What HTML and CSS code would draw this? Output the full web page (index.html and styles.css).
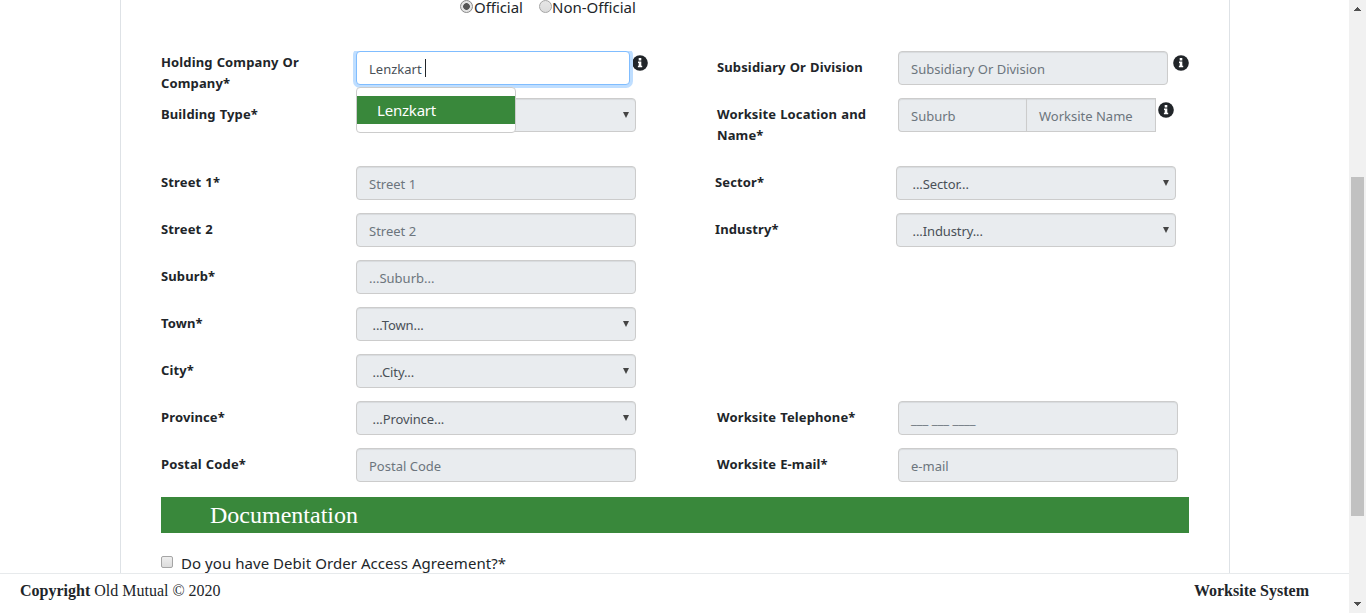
FILE: index.html
```html
<!DOCTYPE html>
<html lang="en">
<head>
<meta charset="utf-8">
<title>Worksite System</title>
<link rel="stylesheet" href="styles.css">
</head>
<body>
<svg width="0" height="0" class="defs"><symbol id="info" viewBox="0 0 16 16"><circle cx="8" cy="8" r="7.8" fill="#212529"/><path fill="#fff" d="M6.7 3h2.6v2.5H6.7zM6 6.5h3.3v4.3h.9v1.5H5.9v-1.5h.8V8H6z"/></symbol></svg>
<div class="window">
  <div class="page">
    <main class="panel">
      <div class="radios"><span class="radio checked"></span><span class="official">Official</span><span class="radio second"></span><span>Non-Official</span></div>
      <div class="form">
        <div class="col left">
          <div class="row"><label class="label raised">Holding Company Or Company*</label>
            <div class="holder"><div class="field short focus">Lenzkart<i class="caret"></i></div>
              <div class="menu"><div class="option">Lenzkart</div></div></div>
            <svg class="info"><use href="#info"/></svg></div>
          <div class="row tall"><label class="label">Building Type*</label><div class="field select lower"></div></div>
          <div class="row"><label class="label">Street 1*</label><div class="field">Street 1</div></div>
          <div class="row"><label class="label">Street 2</label><div class="field">Street 2</div></div>
          <div class="row"><label class="label">Suburb*</label><div class="field">...Suburb...</div></div>
          <div class="row"><label class="label">Town*</label><div class="field select">...Town...</div></div>
          <div class="row"><label class="label">City*</label><div class="field select">...City...</div></div>
          <div class="row"><label class="label">Province*</label><div class="field select">...Province...</div></div>
          <div class="row"><label class="label">Postal Code*</label><div class="field">Postal Code</div></div>
        </div>
        <div class="col right">
          <div class="row"><label class="label">Subsidiary Or Division</label><div class="field medium">Subsidiary Or Division</div><svg class="info gap"><use href="#info"/></svg></div>
          <div class="row tall"><label class="label">Worksite Location and Name*</label><div class="field part">Suburb</div><div class="field part last">Worksite Name</div><svg class="info near"><use href="#info"/></svg></div>
          <div class="row shifted"><label class="label">Sector*</label><div class="field select">...Sector...</div></div>
          <div class="row shifted spaced"><label class="label">Industry*</label><div class="field select">...Industry...</div></div>
          <div class="row"><label class="label">Worksite Telephone*</label><div class="field phone">___ ___ ____</div></div>
          <div class="row"><label class="label">Worksite E-mail*</label><div class="field">e-mail</div></div>
        </div>
      </div>
      <h2 class="heading">Documentation</h2>
      <div class="agree"><span class="check"></span><span class="question">Do you have Debit Order Access Agreement?*</span></div>
    </main>
    <footer class="footer"><span><b>Copyright</b> Old Mutual © 2020</span><b class="system">Worksite System</b></footer>
  </div>
  <div class="scrollbar">
    <svg class="arrow" viewBox="0 0 17 17"><path d="M5 11h7v-1h-1V9h-1V8H9V7H8v1H7v1H6v1H5z" fill="#505050"/></svg>
    <div class="thumb"></div>
    <svg class="arrow end" viewBox="0 0 17 17"><path d="M5 6h7v1h-1v1h-1v1H9v1H8V9H7V8H6V7H5z" fill="#505050"/></svg>
  </div>
</div>
</body>
</html>
```
FILE: styles.css
```css
* { box-sizing: border-box; }
body { margin: 0; background: #fff; color: #212529; font-family: "Noto Sans", "Open Sans", sans-serif; overflow: hidden; }
.defs { display: block; }
.window { display: flex; height: 613px; }
.page { width: 1349px; display: flex; flex-direction: column; }
.panel { height: 573px; width: 1110px; margin-left: 120px; padding: 0 40px; border: solid #dee2e6; border-width: 0 1px; overflow: hidden; }
.radios { display: flex; height: 51px; padding-left: 299px; font-size: 15px; line-height: 14px; }
.official { width: 65px; letter-spacing: -.05px; }
.radio { width: 13px; height: 13px; border: 1px solid #a5a5a5; border-radius: 50%; background: linear-gradient(#e6e6e6, #dcdcdc); margin-right: 1px; flex: none; }
.radio.second { margin-right: 0; }
.radio.checked { background: radial-gradient(circle, #555 0 3px, #e4e4e4 3.7px); border-color: #888; }
.form { display: flex; height: 446px; }
.col { width: 556px; flex: none; }
.row { display: flex; height: 47px; }
.row.tall { height: 68px; }
.label { font-weight: 700; font-size: 13px; letter-spacing: .13px; word-spacing: .5px; line-height: 21px; padding-top: 6px; width: 195px; padding-right: 45px; flex: none; }
.label.raised { padding-top: 1px; }
.right .label { width: 181px; padding-right: 20px; }
.field { width: 280px; height: 34px; border: 1px solid #ccc; border-radius: 4px; background: #e9ecef; color: #6c757d; font-size: 13px; line-height: 20px; padding: 7px 12px; box-shadow: inset 0 1px 1px rgba(0,0,0,.075); position: relative; white-space: nowrap; flex: none; }
.field.short { width: 274px; }
.field.medium { width: 270px; }
.field.focus { margin-right: 1px; background: #fff; border-color: #80bdff; color: #495057; box-shadow: 0 0 0 3px #bfdeff; clip-path: inset(0 -4px -4px -4px); display: flex; }
.caret { width: 1px; height: 18px; margin: 0 0 0 3px; background: #212529; }
.select { padding-left: 15.5px; color: #495057; letter-spacing: -.1px; }
.select::after { content: ""; position: absolute; right: 6px; top: 13px; border: solid transparent; border-width: 6px 3px 0; border-top-color: #444; }
.holder { position: relative; }
.menu { position: absolute; z-index: 2; left: 0; top: 36px; width: 160px; height: 46px; background: #fff; border: 1px solid #ccc; border-radius: 4px; padding-top: 8px; }
.option { height: 28px; background: #39883b; color: #fff; font-size: 15px; letter-spacing: -.2px; line-height: 28px; padding-left: 20px; }
.info { width: 16px; height: 16px; margin: 4px 0 0 1px; flex: none; }
.info.gap { margin-left: 5px; }
.info.near { margin-left: 2px; }
.part { width: 128px; border-radius: 4px 0 0 4px; border-right: 0; }
.part.last { width: 130px; border-radius: 0; border-right: 1px solid #ccc; }
.shifted { margin-left: -2px; }
.spaced { margin-bottom: 141px; }
.heading { margin: 0 0 19px; height: 36px; width: 1028px; background: #39883b; color: #fff; font: 400 24px/36px "Liberation Serif", serif; padding-left: 49px; }
.agree { display: flex; }
.check { width: 12px; height: 12px; margin: 4px 8px 0 0; border: 1px solid #a5a5a5; border-radius: 2px; background: linear-gradient(#eee, #dcdcdc); }
.question { font-size: 15px; letter-spacing: .05px; line-height: 22px; white-space: nowrap; }
.footer { height: 40px; border-top: 1px solid #e7eaec; padding: 7px 40px 0 20px; display: flex; justify-content: space-between; font: 16px/20px "Liberation Serif", serif; position: relative; background: #fff; }
.scrollbar { width: 17px; background: #f1f1f1; display: flex; flex-direction: column; }
.arrow { width: 17px; height: 17px; display: block; shape-rendering: crispEdges; }
.arrow.end { margin-top: auto; }
.thumb { width: 13px; height: 339px; margin: 160px 0 0 2px; background: #c1c1c1; }
```
